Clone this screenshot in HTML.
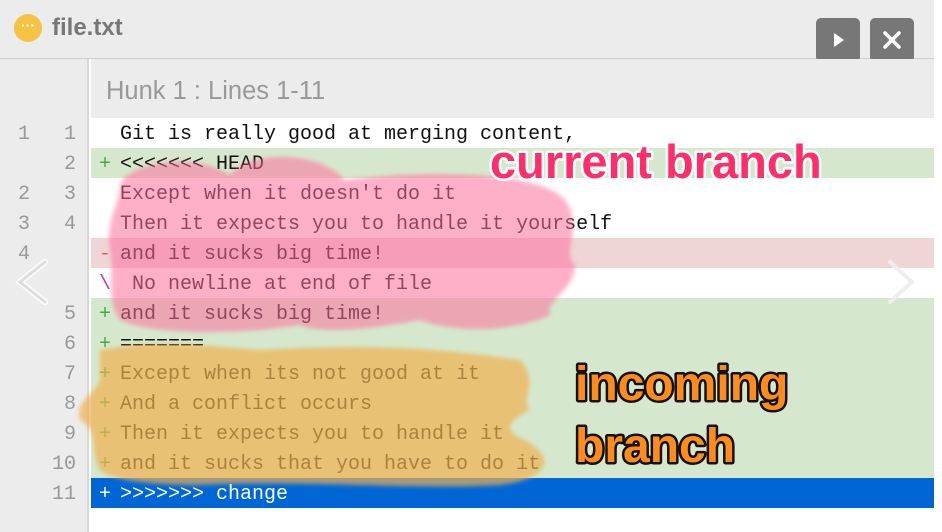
<!DOCTYPE html>
<html><head><meta charset="utf-8"><style>
*{margin:0;padding:0;box-sizing:border-box}
body{width:942px;height:532px;overflow:hidden;background:#fff;font-family:"Liberation Sans",sans-serif;position:relative}
#hdr{position:absolute;left:0;top:0;width:934px;height:59px;background:#ececec;border-bottom:1px solid #cfcfcf}
#dot{position:absolute;left:14px;top:14px;width:28px;height:28px;border-radius:50%;background:#f5c242;color:#fff;font-size:14px;font-weight:bold;text-align:center;line-height:22px}
#title{position:absolute;left:52px;top:14px;font-size:24px;font-weight:bold;color:#777}
.btn{position:absolute;top:18px;width:44px;height:44px;border-radius:5px;background:#777}
#gut{position:absolute;left:0;top:59px;width:89px;height:473px;background:#ececec;border-right:2px solid #d6d6d6}
#hunkbar{position:absolute;left:91px;top:59px;width:843px;height:59px;background:#ececec}
#hunk{position:absolute;left:106px;top:77px;font-size:25.5px;color:#999}
.row{position:absolute;left:91px;width:843px;height:30px;font-family:"Liberation Mono",monospace;font-size:20px;line-height:30px;padding-top:2px;color:#111;white-space:pre}
.n{position:absolute;width:30px;text-align:right;font-family:"Liberation Mono",monospace;font-size:20px;color:#999;line-height:30px;padding-top:2px}
.g{background:#d5e8cd}.r{background:#efd5d6}.b{background:#0066d6;color:#fff}
.m{display:inline-block;width:29px;padding-left:8px;color:#4a4}
</style></head><body>
<div id="hdr"><div id="dot">···</div><div id="title">file.txt</div>
<div class="btn" style="left:816px"><svg width="44" height="44"><path d="M18 15 L28 22 L18 29Z" fill="#fff"/></svg></div>
<div class="btn" style="left:870px"><svg width="44" height="44"><path d="M15 15 L29 29 M29 15 L15 29" stroke="#fff" stroke-width="3.5" stroke-linecap="round"/></svg></div>
</div>
<div id="gut"></div>
<div id="hunkbar"></div>
<div id="hunk">Hunk 1 : Lines 1-11</div>

<div class="row" style="top:118px"><span class="m"> </span>Git is really good at merging content,</div>
<div class="row g" style="top:148px"><span class="m">+</span>&lt;&lt;&lt;&lt;&lt;&lt;&lt; HEAD</div>
<div class="row" style="top:178px"><span class="m"> </span>Except when it doesn't do it</div>
<div class="row" style="top:208px"><span class="m"> </span>Then it expects you to handle it yourself</div>
<div class="row r" style="top:238px"><span class="m" style="color:#c66">-</span>and it sucks big time!</div>
<div class="row" style="top:268px"><span class="m" style="color:#a4a">\</span> No newline at end of file</div>
<div class="row g" style="top:298px"><span class="m">+</span>and it sucks big time!</div>
<div class="row g" style="top:328px"><span class="m">+</span>=======</div>
<div class="row g" style="top:358px"><span class="m">+</span>Except when its not good at it</div>
<div class="row g" style="top:388px"><span class="m">+</span>And a conflict occurs</div>
<div class="row g" style="top:418px"><span class="m">+</span>Then it expects you to handle it</div>
<div class="row g" style="top:448px"><span class="m">+</span>and it sucks that you have to do it</div>
<div class="row b" style="top:478px"><span class="m" style="color:#fff">+</span>&gt;&gt;&gt;&gt;&gt;&gt;&gt; change</div>

<div class="n" style="left:0px;top:118px">1</div><div class="n" style="left:46px;top:118px">1</div>
<div class="n" style="left:46px;top:148px">2</div>
<div class="n" style="left:0px;top:178px">2</div><div class="n" style="left:46px;top:178px">3</div>
<div class="n" style="left:0px;top:208px">3</div><div class="n" style="left:46px;top:208px">4</div>
<div class="n" style="left:0px;top:238px">4</div>
<div class="n" style="left:46px;top:298px">5</div>
<div class="n" style="left:46px;top:328px">6</div>
<div class="n" style="left:46px;top:358px">7</div>
<div class="n" style="left:46px;top:388px">8</div>
<div class="n" style="left:46px;top:418px">9</div>
<div class="n" style="left:46px;top:448px">10</div>
<div class="n" style="left:46px;top:478px">11</div>

<svg style="position:absolute;left:0;top:0" width="942" height="532">
<defs><filter id="bl"><feGaussianBlur stdDeviation="2"/></filter></defs>
<g filter="url(#bl)">
<path d="M120 185 C125 165 190 150 230 175 C250 150 320 150 345 180 C420 170 540 170 565 200 C585 230 560 250 575 265 C575 290 545 300 550 315 C520 330 460 335 420 320 C380 328 320 335 300 325 C240 335 150 335 120 320 C105 300 115 270 110 250 C105 220 120 205 120 185Z" fill="#ff6f9c" fill-opacity="0.55"/>
<path d="M100 350 C150 340 200 345 260 350 C350 345 420 345 520 360 C540 380 520 400 530 410 C510 420 500 430 525 440 C560 460 545 480 500 485 C420 490 300 480 200 485 C150 485 110 480 100 470 C90 455 100 430 80 420 C75 400 95 395 100 380Z" fill="#f0b050" fill-opacity="0.7"/>
</g>
<path d="M45 262 L20 282 L45 302" stroke="#fff" stroke-width="6" fill="none" stroke-linecap="round" opacity="0.9"/>
<path d="M45 262 L20 282 L45 302" stroke="#ddd" stroke-width="3" fill="none" stroke-linecap="round"/>
<path d="M890 262 L912 282 L890 302" stroke="#eee" stroke-width="4" fill="none" stroke-linecap="round"/>
<text x="490" y="178" font-family="Liberation Sans" font-weight="bold" font-size="47" fill="#ff2d6a" stroke="#fff" stroke-width="5" paint-order="stroke" stroke-linejoin="round">current branch</text>
<text x="575" y="400" font-family="Liberation Sans" font-weight="bold" font-size="48" fill="#ff8c1a" stroke="#111" stroke-width="5" paint-order="stroke" stroke-linejoin="round">incoming</text>
<text x="575" y="462" font-family="Liberation Sans" font-weight="bold" font-size="48" fill="#ff8c1a" stroke="#111" stroke-width="5" paint-order="stroke" stroke-linejoin="round">branch</text>
</svg>
</body></html>
